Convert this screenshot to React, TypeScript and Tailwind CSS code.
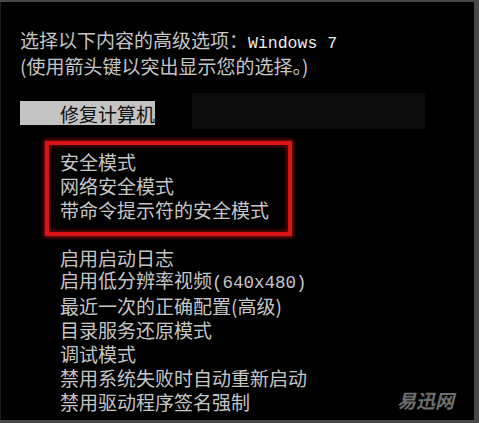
import React from "react";

const L = ({ children }: { children: React.ReactNode }) => (
  <span className="font-['Liberation_Mono',monospace] text-[17.5px] leading-none">{children}</span>
);

const Row = ({ children, className = "" }: { children?: React.ReactNode; className?: string }) => (
  <div className={"flex items-center h-[24px] overflow-visible " + className}>
    <span className="leading-none">{children}</span>
  </div>
);

export default function App() {
  const items: React.ReactNode[] = [
    "启用启动日志",
    <>启用低分辨率视频<L>(640x480)</L></>,
    "最近一次的正确配置(高级)",
    "目录服务还原模式",
    "调试模式",
    "禁用系统失败时自动重新启动",
    "禁用驱动程序签名强制",
  ];
  return (
    <div className="w-[479px] h-[423px] bg-[#474747] pt-[2px] pr-[5px] pb-[3px] overflow-hidden">
      <div className="relative h-full bg-black border-l border-[#1c1c1c] pt-[27px] pl-[19px] text-[19px] leading-[24px] text-[#c6c6c6] font-['Noto_Sans_CJK_SC',sans-serif] whitespace-nowrap">
        <div className="absolute left-[191px] top-[91px] w-[233px] h-[36px] bg-[#0b0b0b]" />
        <Row className="relative">
          选择以下内容的高级选项：<span className="font-['Liberation_Mono',monospace] text-[16.5px] leading-none text-[#ececec]">Windows 7</span>
        </Row>
        <Row className="relative">(使用箭头键以突出显示您的选择。)</Row>
        <div className="h-[24px]" />
        <Row className="relative w-[135px] bg-[#c3c3c3] text-[#111] pl-[40px]">修复计算机</Row>
        <div className="h-[24px]" />
        <div className="pl-[40px]">
          <Row>安全模式</Row>
          <Row>网络安全模式</Row>
          <Row>带命令提示符的安全模式</Row>
          <div className="h-[24px]" />
          {items.map((t, i) => (
            <Row key={i}>{t}</Row>
          ))}
        </div>
        <div className="absolute left-[44px] top-[139px] w-[247px] h-[95px] border-[4px] border-[#d81414] shadow-[0_0_4px_1px_rgba(200,20,20,0.8),inset_0_0_4px_1px_rgba(200,20,20,0.6)]" />
        <div className="absolute right-[20px] bottom-[10px] text-[19px] leading-[20px] font-bold italic text-[#6e6e6e] font-['Noto_Sans_CJK_SC',sans-serif]">
          易迅网
        </div>
      </div>
    </div>
  );
}
